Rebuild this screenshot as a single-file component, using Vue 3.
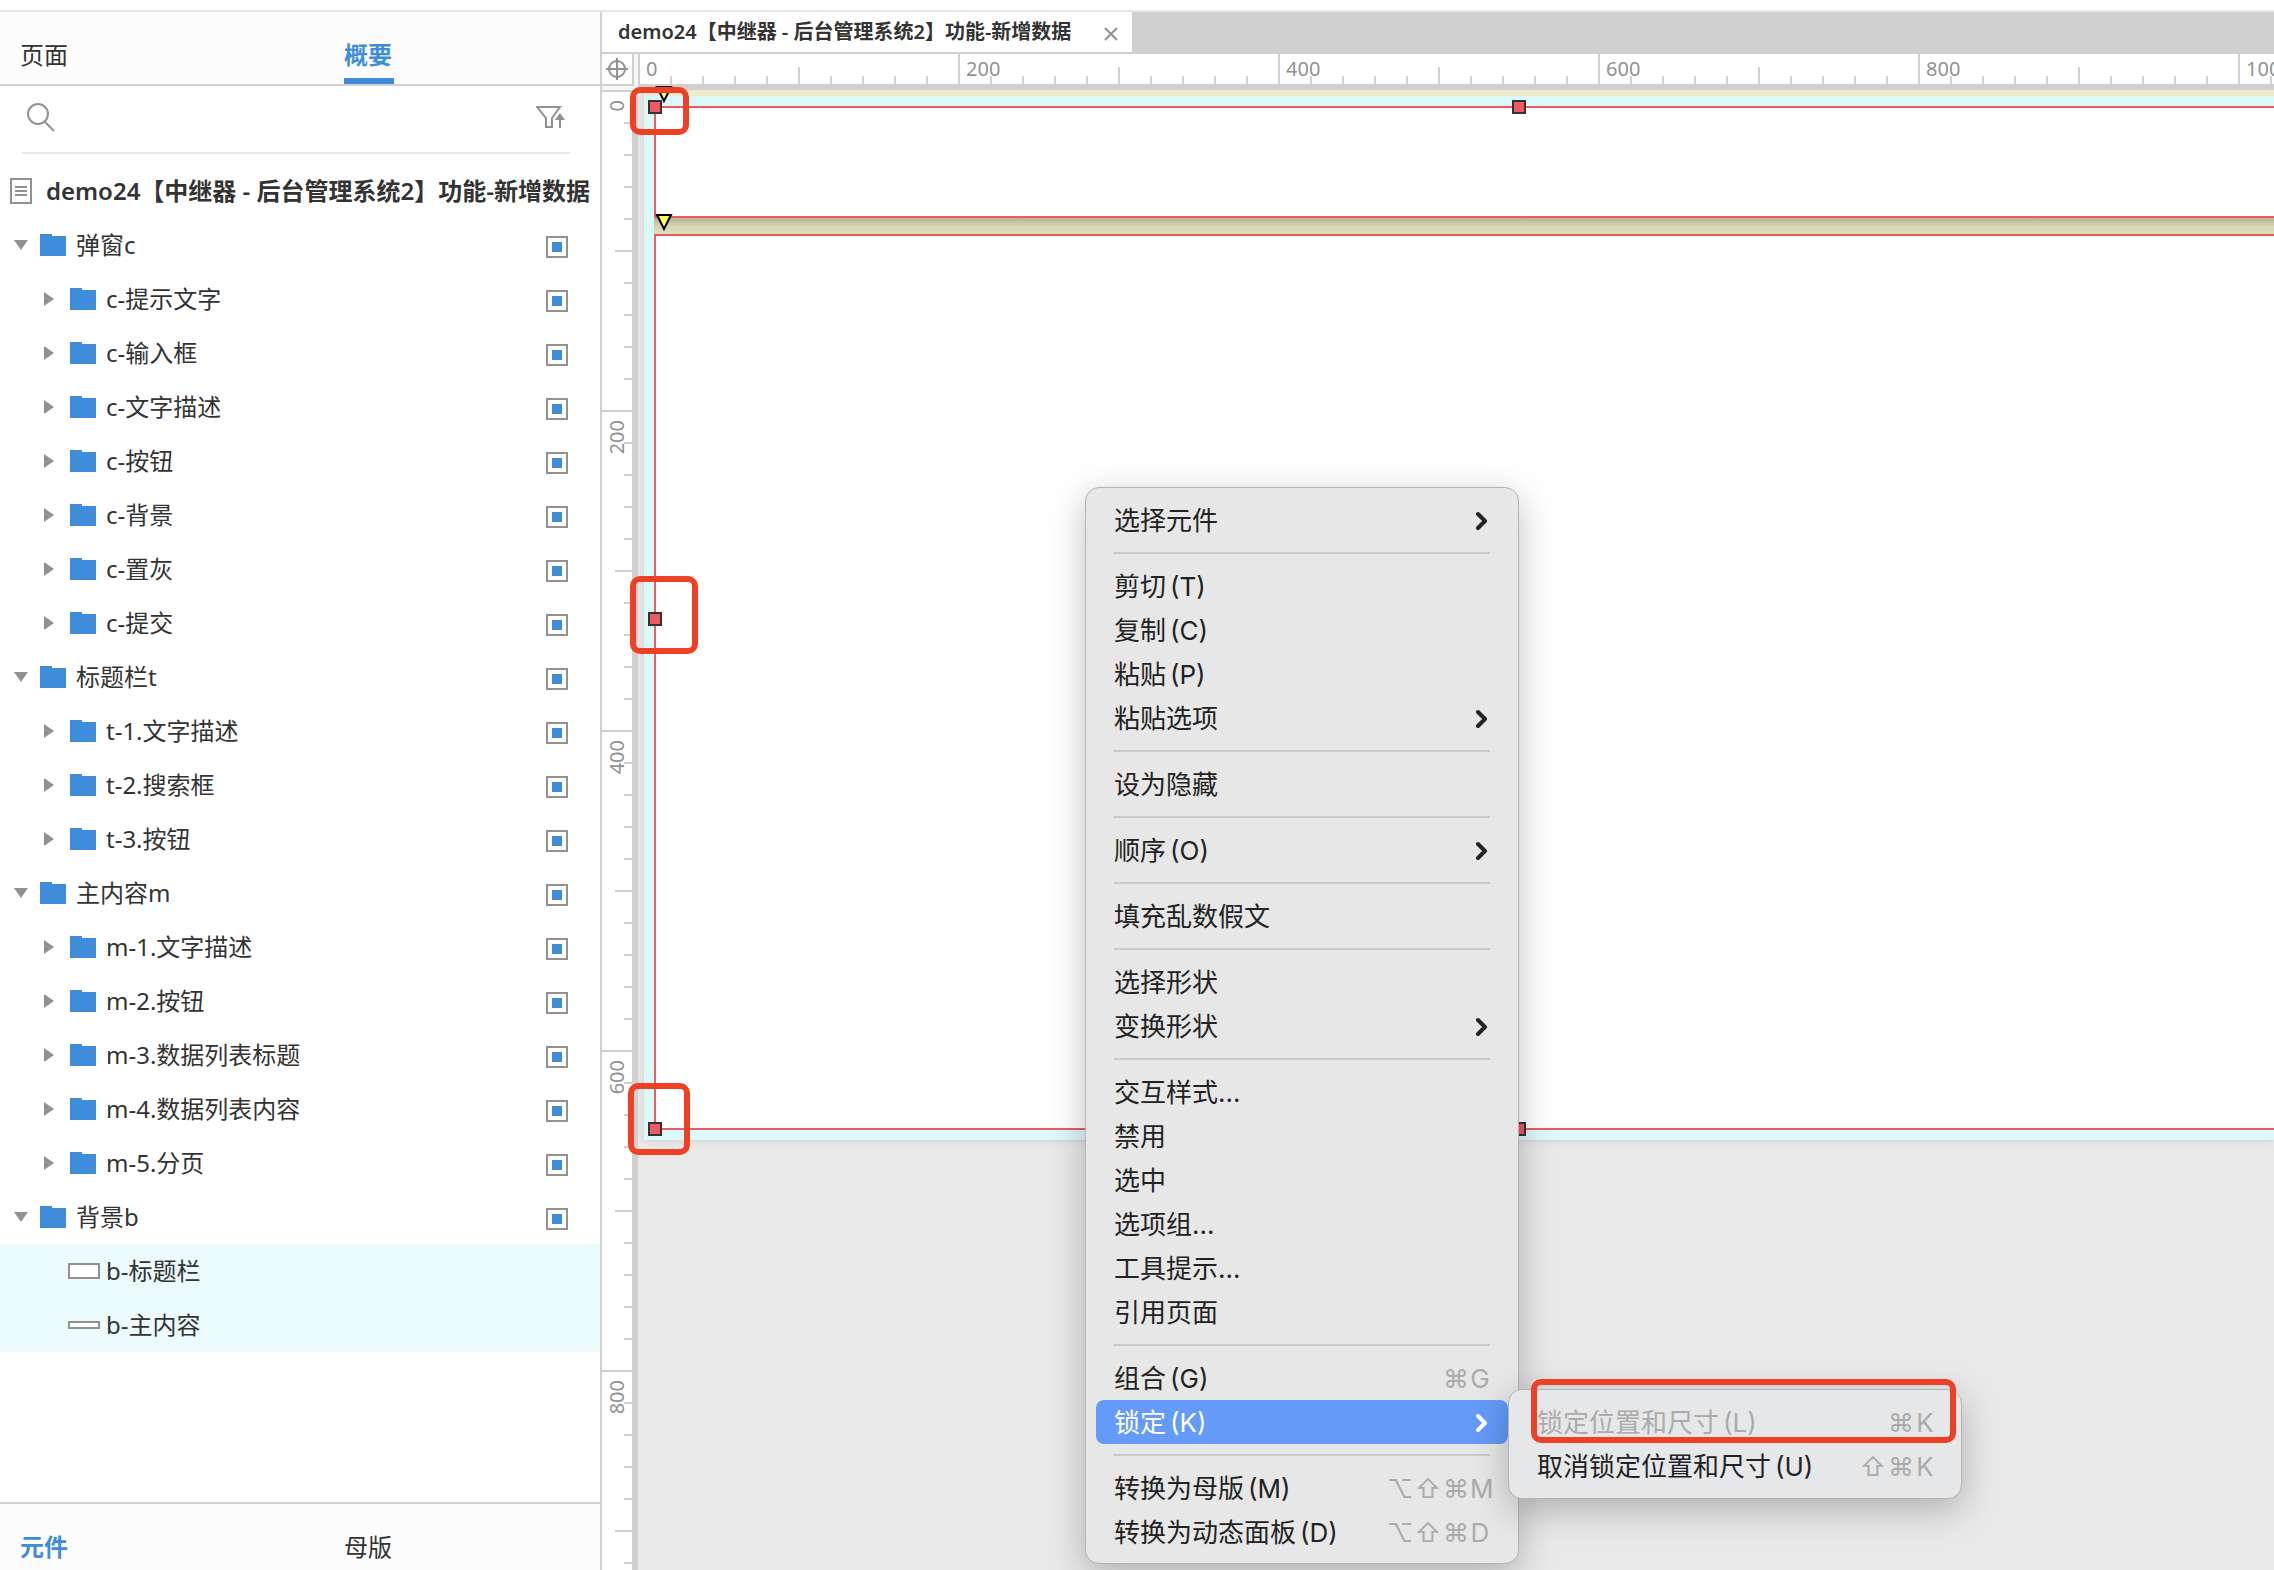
<script setup>
import { ref } from 'vue'

const title = 'demo24【中继器 - 后台管理系统2】功能-新增数据'
const keyword = ref('')

const groups = [
  { name: '弹窗c', items: ['c-提示文字', 'c-输入框', 'c-文字描述', 'c-按钮', 'c-背景', 'c-置灰', 'c-提交'] },
  { name: '标题栏t', items: ['t-1.文字描述', 't-2.搜索框', 't-3.按钮'] },
  { name: '主内容m', items: ['m-1.文字描述', 'm-2.按钮', 'm-3.数据列表标题', 'm-4.数据列表内容', 'm-5.分页'] },
]
const rows = [
  ...groups.flatMap((g) => [
    { name: g.name, kind: 'group' },
    ...g.items.map((name) => ({ name, kind: 'child' })),
  ]),
  { name: '背景b', kind: 'group' },
]
const shapes = [
  { name: 'b-标题栏', size: 'tall' },
  { name: 'b-主内容', size: 'flat' },
]

const acrossMarks = [0, 200, 400, 600, 800, 1000]
const downMarks = [0, 200, 400, 600, 800]

const menu = [
  [{ text: '选择元件', sub: true }],
  [{ text: '剪切', key: '(T)' }, { text: '复制', key: '(C)' }, { text: '粘贴', key: '(P)' }, { text: '粘贴选项', sub: true }],
  [{ text: '设为隐藏' }],
  [{ text: '顺序', key: '(O)', sub: true }],
  [{ text: '填充乱数假文' }],
  [{ text: '选择形状' }, { text: '变换形状', sub: true }],
  [{ text: '交互样式...' }, { text: '禁用' }, { text: '选中' }, { text: '选项组...' }, { text: '工具提示...' }, { text: '引用页面' }],
  [{ text: '组合', key: '(G)', keys: ['⌘', 'G'] }, { text: '锁定', key: '(K)', sub: true, active: true }],
  [
    { text: '转换为母版', key: '(M)', keys: ['⌥', '⇧', '⌘', 'M'] },
    { text: '转换为动态面板', key: '(D)', keys: ['⌥', '⇧', '⌘', 'D'] },
  ],
]
const submenu = [
  { text: '锁定位置和尺寸', key: '(L)', keys: ['⌘', 'K'], disabled: true },
  { text: '取消锁定位置和尺寸', key: '(U)', keys: ['⇧', '⌘', 'K'] },
]
</script>

<template>
  <div class="app">
    <div class="workspace">
      <aside class="sidebar">
        <nav class="panel-tabs">
          <button type="button">页面</button>
          <button type="button" class="current underlined">概要</button>
        </nav>

        <div class="search">
          <svg width="30" height="30" viewBox="0 0 30 30" fill="none" stroke="#919191" stroke-width="2">
            <circle cx="12" cy="12" r="10" />
            <path d="M19 20l9 9" />
          </svg>
          <input v-model="keyword" type="search" aria-label="搜索" />
          <button type="button" aria-label="筛选">
            <svg width="30" height="24" viewBox="0 0 30 24" fill="none" stroke="#919191" stroke-width="2">
              <path d="M1 2h23l-8 11v9h-6v-9L1 2zM24 23V12" />
              <path d="M19 15l5-7 5 7z" fill="#919191" stroke="none" />
            </svg>
          </button>
        </div>

        <ul class="tree">
          <li class="row root">
            <svg width="22" height="26" viewBox="0 0 22 26" fill="none" stroke="#919191" stroke-width="2">
              <path d="M1 1h20v24H1zM5 9h12M5 13h12M5 17h12" />
            </svg>
            <strong>{{ title }}</strong>
          </li>
          <li v-for="row in rows" :key="row.name" class="row" :class="row.kind">
            <button type="button" class="twisty" :aria-label="row.name" :aria-expanded="row.kind === 'group'">
              <svg v-if="row.kind === 'group'" width="14" height="10"><path d="M0 0h14L7 10z" fill="#919191" /></svg>
              <svg v-else width="10" height="14"><path d="M0 0l10 7-10 7z" fill="#919191" /></svg>
            </button>
            <svg class="folder" width="26" height="22"><path d="M0 0h12v2h14v20H0z" fill="#3f8dda" /></svg>
            <span>{{ row.name }}</span>
            <input type="checkbox" checked :aria-label="row.name" />
          </li>
          <li v-for="shape in shapes" :key="shape.name" class="row shape">
            <i :class="shape.size"></i>
            <span>{{ shape.name }}</span>
          </li>
        </ul>

        <nav class="panel-tabs library">
          <button type="button" class="current">元件</button>
          <button type="button">母版</button>
        </nav>
      </aside>

      <main class="editor">
        <div class="file-tabs">
          <div class="file-tab">
            <strong>{{ title }}</strong>
            <button type="button" aria-label="关闭">
              <svg width="14" height="14" viewBox="0 0 14 14" stroke="#919191" stroke-width="2"><path d="M1 1l12 12M13 1L1 13" /></svg>
            </button>
          </div>
        </div>

        <div class="stage">
          <div class="corner">
            <svg width="30" height="30" viewBox="0 0 30 30" fill="none" stroke="#919191" stroke-width="2">
              <circle cx="15" cy="15" r="8" /><path d="M4 15h22M15 4v22" />
            </svg>
          </div>
          <div class="ruler across">
            <span v-for="m in acrossMarks" :key="m">{{ m }}</span>
          </div>
          <div class="ruler down">
            <span v-for="m in downMarks" :key="m"><b>{{ m }}</b></span>
          </div>
          <div class="canvas">
            <div class="artboard">
              <div class="widget header"></div>
              <div class="band"></div>
              <div class="widget body"></div>
            </div>
            <i class="handle top left"></i>
            <i class="handle top mid"></i>
            <i class="handle center left"></i>
            <i class="handle bottom left"></i>
            <i class="handle bottom mid"></i>
          </div>
          <svg class="marker first" width="18" height="18"><path d="M2 1h14L9 15z" fill="#ffff59" stroke="#000" stroke-width="2" /></svg>
          <svg class="marker second" width="18" height="18"><path d="M2 1h14L9 15z" fill="#ffff59" stroke="#000" stroke-width="2" /></svg>
        </div>
      </main>
    </div>

    <i class="note n1"></i>
    <i class="note n2"></i>
    <i class="note n3"></i>

    <div class="menu main-menu" role="menu">
      <div v-for="(section, i) in menu" :key="i" class="section">
        <button v-for="item in section" :key="item.text" type="button" role="menuitem" :class="{ active: item.active }">
          <span>{{ item.text }}</span><span v-if="item.key" class="access">{{ item.key }}</span>
          <svg v-if="item.sub" class="chevron" width="12" height="20" viewBox="0 0 12 20" fill="none" stroke="currentColor" stroke-width="4" stroke-linecap="round" stroke-linejoin="round"><path d="M2 3l7 7-7 7" /></svg>
          <span v-if="item.keys" class="keys"><kbd v-for="k in item.keys" :key="k">{{ k }}</kbd></span>
        </button>
      </div>
    </div>

    <div class="menu sub-menu" role="menu">
      <button v-for="item in submenu" :key="item.text" type="button" role="menuitem" :disabled="item.disabled">
        <span>{{ item.text }}</span><span class="access">{{ item.key }}</span>
        <span class="keys"><kbd v-for="k in item.keys" :key="k">{{ k }}</kbd></span>
      </button>
    </div>
    <i class="note n4"></i>
  </div>
</template>

<style>
body {
  margin: 0;
  background: #fff;
}
</style>

<style scoped>
* {
  box-sizing: border-box;
}
.app {
  position: relative;
  display: flex;
  flex-direction: column;
  height: 100vh;
  padding-top: 10px;
  overflow: hidden;
  color: #333;
  font: 24px/32px "Noto Sans", "Noto Sans CJK SC", sans-serif;
}
button {
  padding: 0;
  border: 0;
  background: none;
  color: inherit;
  font: inherit;
  text-align: left;
}
svg {
  display: block;
  flex: none;
}
.workspace {
  display: flex;
  flex: 1;
  min-height: 0;
  border-top: 2px solid #e6e6e6;
}

/* sidebar */
.sidebar {
  display: flex;
  flex: none;
  flex-direction: column;
  width: 602px;
  border-right: 2px solid #d0d0d0;
}
.panel-tabs {
  display: grid;
  flex: none;
  grid-template-columns: 324px auto;
  justify-content: start;
  height: 74px;
  padding-left: 20px;
  border-bottom: 2px solid #d0d0d0;
  background: #fcfcfc;
}
.panel-tabs button {
  padding-top: 20px;
  border-bottom: 6px solid transparent;
}
.panel-tabs .current {
  color: #3f8dda;
  font-weight: 700;
}
.panel-tabs .underlined {
  width: 50px;
  border-bottom-color: #3f8dda;
}
.library {
  height: 68px;
  margin-top: auto;
  padding-top: 6px;
  border-top: 2px solid #d0d0d0;
  border-bottom: 0;
}
.search {
  display: flex;
  flex: none;
  align-items: center;
  height: 68px;
  margin: 0 30px 10px 22px;
  padding: 0 4px 4px;
  border-bottom: 2px solid #e6e6e6;
}
.search input {
  flex: 1;
  min-width: 0;
  border: 0;
  outline: 0;
  background: none;
  font: inherit;
}
.tree {
  margin: 0;
  padding: 0;
  list-style: none;
}
.row {
  display: flex;
  align-items: center;
  height: 54px;
  padding-right: 32px;
  white-space: nowrap;
}
.row strong {
  font-weight: 600;
}
.root {
  gap: 14px;
  padding: 0 0 0 10px;
}
.group {
  padding-left: 14px;
}
.child {
  padding-left: 44px;
}
.twisty {
  flex: none;
  width: 26px;
}
.folder {
  margin-right: 10px;
}
.row input {
  display: grid;
  place-items: center;
  width: 22px;
  height: 22px;
  margin: 4px 0 0 auto;
  border: 2px solid #919191;
  background: #fff;
  appearance: none;
}
.row input:checked::before {
  width: 10px;
  height: 10px;
  background: #3f8dda;
  content: "";
}
.shape {
  gap: 6px;
  padding-left: 68px;
  background: #ebfafa;
}
.shape i {
  width: 32px;
  border: 2px solid #919191;
  background: #fff;
}
.tall {
  height: 16px;
}
.flat {
  height: 8px;
}

/* editor */
.editor {
  display: flex;
  flex: 1;
  flex-direction: column;
  min-width: 0;
}
.file-tabs {
  display: flex;
  flex: none;
  height: 42px;
  border-bottom: 2px solid #d0d0d0;
  background: #d0d0d0;
}
.file-tab {
  display: flex;
  align-items: center;
  justify-content: space-between;
  width: 530px;
  padding: 0 14px 0 16px;
  background: #fff;
  font-size: 20px;
  white-space: nowrap;
}
.file-tab strong {
  font-weight: 600;
}
.file-tab button {
  padding-top: 4px;
}
.stage {
  position: relative;
  display: grid;
  flex: 1;
  grid-template-rows: 36px minmax(0, 1fr);
  grid-template-columns: 36px minmax(0, 1fr);
  min-height: 0;
}
.corner {
  border-right: 4px solid #f6f6f6;
  border-bottom: 4px solid #f6f6f6;
  box-shadow: inset -2px -2px #d0d0d0;
}
.ruler {
  display: flex;
  overflow: hidden;
  color: #919191;
  font-size: 20px;
  line-height: 30px;
}
.ruler span {
  flex: none;
  background-repeat: no-repeat;
}
.across {
  border-bottom: 6px solid #d0d0d0;
}
.across span {
  width: 320px;
  padding-left: 8px;
  background-image: linear-gradient(#d0d0d0, #d0d0d0), linear-gradient(#d0d0d0, #d0d0d0),
    repeating-linear-gradient(90deg, #d0d0d0 0 2px, transparent 2px 32px);
  background-position: 0 0, 160px 100%, 0 100%;
  background-size: 2px 100%, 2px 17px, 100% 8px;
}
.down {
  flex-direction: column;
  border-right: 6px solid #d0d0d0;
}
.down span {
  height: 320px;
  padding-top: 10px;
  background-image: linear-gradient(#d0d0d0, #d0d0d0), linear-gradient(#d0d0d0, #d0d0d0),
    repeating-linear-gradient(#d0d0d0 0 2px, transparent 2px 32px);
  background-position: 0 0, 100% 160px, 100% 0;
  background-size: 100% 2px, 17px 2px, 8px 100%;
}
.down b {
  display: block;
  width: 30px;
  font-weight: 400;
  transform: rotate(180deg);
  writing-mode: vertical-rl;
}
.canvas {
  position: relative;
  overflow: hidden;
  background: #e9e9e9;
}
.artboard {
  margin-left: 6px;
  padding: 16px 0 10px 10px;
  background: linear-gradient(90deg, #e9e9e9, #eeebcd 14px) top / 100% 6px no-repeat #dcf9f9;
  box-shadow: 0 0 8px #0000001f;
}
.widget {
  border: 2px solid #ee5a64;
  border-right: 0;
  background: #fff;
}
.header {
  height: 112px;
}
.band {
  height: 16px;
  background: linear-gradient(#b2b296, #d5d5b2 50%, #dddebd);
}
.body {
  height: 896px;
}

/* selection handles on the free canvas */
.handle {
  position: absolute;
  width: 14px;
  height: 14px;
  border: 2px solid #333;
  background: #ee5a64;
}
.top { top: 10px; }
.center { top: 522px; }
.bottom { top: 1032px; }
.left { left: 10px; }
.mid { left: 874px; }
.marker {
  position: absolute;
  left: 53px;
}
.first { top: 32px; }
.second { top: 160px; }

/* highlight frames */
.note {
  position: absolute;
  border: 6px solid #ed4024;
  border-radius: 10px;
  pointer-events: none;
}
.n1 { top: 87px; left: 630px; width: 59px; height: 48px; }
.n2 { top: 576px; left: 630px; width: 68px; height: 78px; }
.n3 { top: 1083px; left: 628px; width: 62px; height: 72px; }
.n4 { top: 1379px; left: 1531px; width: 425px; height: 64px; }

/* context menu */
.menu {
  position: absolute;
  border: 1px solid #b4b4b4;
  border-radius: 14px;
  background: #e7e7e7;
  box-shadow: 0 10px 36px #00000040;
  color: #222;
  font: 26px/42px Inter, "Noto Sans CJK SC", sans-serif;
}
.main-menu {
  top: 487px;
  left: 1085px;
  width: 434px;
  padding: 10px 10px 9px;
}
.sub-menu {
  top: 1389px;
  left: 1508px;
  width: 454px;
  padding: 10px 8px 10px 10px;
  background: #e6e7e9;
}
.section + .section::before {
  display: block;
  height: 2px;
  margin: 10px 18px;
  background: #cacaca;
  content: "";
}
.menu button {
  display: flex;
  align-items: center;
  width: 100%;
  height: 44px;
  padding: 2px 18px 0;
  border-radius: 8px;
  white-space: nowrap;
}
.menu .active {
  background: #649af8;
  color: #fff;
}
.menu :disabled {
  color: #ababab;
}
.access {
  padding-left: 4px;
}
.chevron {
  margin-left: auto;
  margin-right: 2px;
}
.keys {
  display: flex;
  margin-left: auto;
  color: #ababab;
}
.keys kbd {
  width: 28px;
  font: inherit;
  text-align: center;
}
.keys kbd:last-child {
  width: 20px;
}
</style>
